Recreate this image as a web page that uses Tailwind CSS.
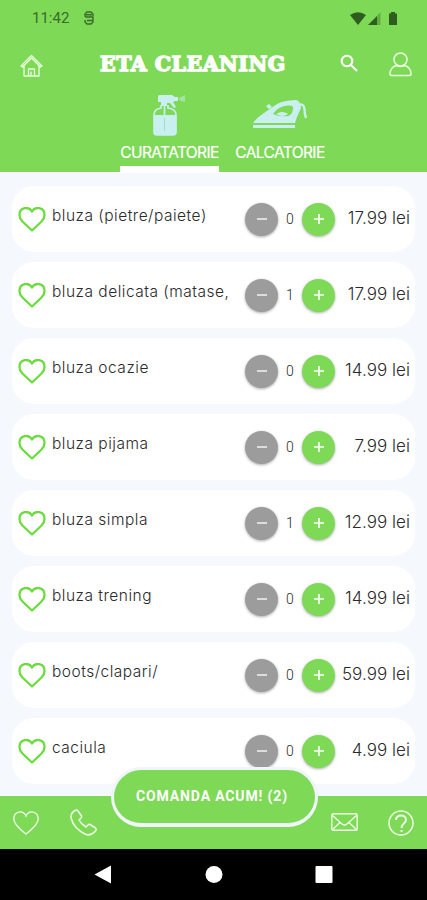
<!DOCTYPE html>
<html lang="ro">
<head>
  <meta charset="UTF-8" />
  <meta name="viewport" content="width=device-width, initial-scale=1.0"/>
  <title>ETA Cleaning</title>
  <script src="https://cdn.jsdelivr.net/npm/@tailwindcss/browser@4"></script>
</head>
<body class="bg-[#f5f9fe] font-['Inter',sans-serif]">
  <div class="w-[427px] h-[900px] flex flex-col overflow-hidden relative">

    <header class="h-[172px] shrink-0 bg-[#7ed957] flex flex-col">
      <!-- status bar -->
      <div class="h-9 flex items-center pl-8 pr-7 text-[#3b6a2a]">
        <span class="font-['Roboto',sans-serif] text-[15px] leading-none w-[52px]">11:42</span>
        <svg class="w-[10px] h-[14px]" viewBox="0 0 10 14" fill="none" stroke="currentColor" stroke-width="1.4"><path d="M9 5V3L7 1H3L1 3V5L2 6H9V11L7 13H3L1 11V9M2 3.700H8M3 9.500H9"/></svg>
        <svg class="ml-auto w-12 h-[15px] overflow-visible" viewBox="0 0 48 15" fill="#2f5d20"><path d="M-1 4Q7 -1.500 15 4L7 14Z"/><path d="M17 14L26 5V14Z"/><path d="M26 5L29.500 1V14H26Z" opacity=".35"/><path d="M40 1h4v1.500h2V14h-8V2.500h2Z"/></svg>
      </div>

      <div class="h-[56px] flex items-center pl-5 pr-[15px]">
        <svg class="w-[23px] h-[23px] mt-0.5" viewBox="0 0 23 23" fill="none" stroke="#eaffdf" stroke-width="1.3" stroke-linejoin="round" stroke-linecap="round"><path d="M1 12L11.500 1.500L22 12L20.500 13L11.500 4L2.500 13ZM4 12V22H19V12M8.500 22V15H14.500V22M11 22V18"/></svg>
        <h1 class="ml-[57px] w-[190px] whitespace-nowrap text-white text-[20.500px] leading-none font-bold font-['DejaVu_Serif',serif] tracking-[0.500px] [-webkit-text-stroke:1.400px_white]">ETA CLEANING</h1>
        <svg class="ml-[50px] -mt-0.5 w-[18px] h-[18px]" viewBox="0 0 18 18" fill="none" stroke="white" stroke-width="2.100"><circle cx="7" cy="7" r="5.300"/><path d="M11 11L17 17"/></svg>
        <svg class="ml-auto w-[23px] h-[25px]" viewBox="0 0 23 25" fill="none" stroke="#eaffdf" stroke-width="1.500"><circle cx="11.500" cy="7.500" r="6.500"/><path d="M7 13.500Q1 16 1 22Q1 23.500 3 23.500H20Q22 23.500 22 22Q22 16 16 13.500Q11.500 15.500 7 13.500Z"/></svg>
      </div>

      <nav class="h-20 flex pl-[120px] gap-4 text-white text-[15.500px]">
        <div class="w-[99px] flex flex-col items-center border-b-[6px] border-white">
          <svg class="w-[34px] h-[43px] mt-[2px]" viewBox="0 0 34 43"><g fill="#c9eff0"><path d="M5 2Q5 1 7 1H19L22 3H25V7H22L20 8L23 13L21 14L17 9H14V12H8V8H5Z"/><path d="M26 4L32 1V8L26 6Z" opacity=".5"/><path d="M1 21H23V39Q23 41 20 41H4Q1 41 1 39Z"/></g><path d="M8 11V14Q1 15 1 21V38Q1 41 4 41H20Q23 41 23 38V21Q23 15 15 14V11M11.500 12V21" fill="none" stroke="#c9eff0" stroke-width="1.700"/><path d="M11.500 24V37" stroke="#a3e0b4"/></svg>
          <span class="mt-[5px] leading-[22px] whitespace-nowrap tracking-[-0.600px] [-webkit-text-stroke:0.200px_white]">CURATATORIE</span>
        </div>
        <div class="w-[90px] flex flex-col items-center">
          <svg class="w-[56px] h-[43px] mt-[2px]" viewBox="0 0 56 43"><path fill="#c9eff0" fill-rule="evenodd" d="M1 29Q4 24 12 19L22 12Q27 8 34 7L43 6Q47 6 48 10L49 14L45 23L43 29ZM21 20Q26 12 36 11.500Q42 11 41 15Q40 21 36 22Q27 23 21 20ZM1 31H43V34H1Z"/><path d="M24 20Q30 16 36 20Q31 24 24 20ZM14 12L17 10L20 13L17 15Z" fill="#c9eff0"/><path d="M46 11Q52 9 52.500 15Q52.500 20 54 24" fill="none" stroke="#c9eff0" stroke-width="2.400"/></svg>
          <span class="mt-[5px] leading-[22px] whitespace-nowrap tracking-[-0.600px] [-webkit-text-stroke:0.200px_white]">CALCATORIE</span>
        </div>
      </nav>
    </header>

    <main id="items" class="h-[624px] shrink-0 overflow-hidden border-t border-white pt-[13px] px-3 flex flex-col gap-[10px]"></main>

    <footer class="h-[53px] shrink-0 bg-[#7ed957] flex items-center pl-[13px] pr-[13px]">
      <svg class="w-[26px] h-[24px]" viewBox="0 0 26 24" fill="none" stroke="#efffe7" stroke-width="1.400"><path d="M13 23Q1 14 .8 8C.8 0 10 -1.500 13 5C16 -1.500 25.200 0 25.200 8Q25 14 13 23Z"/></svg>
      <svg class="ml-[31px] w-[27px] h-[27px]" viewBox="0 0 27 27" fill="none" stroke="#efffe7" stroke-width="1.500" stroke-linejoin="round"><path d="M5 1.500Q7 .5 8 2L11.500 7Q12 8.500 10.500 9.500L9 11Q11 15 16 18L18 16Q19 15 20 15.500L25.500 19Q27 20.500 25 22.500Q21 27 16 25.500Q4 20 1 9Q.5 4 5 1.500Z"/></svg>
      <svg class="ml-auto -mt-0.5 w-[27px] h-[18px]" viewBox="0 0 27 18" fill="none" stroke="#efffe7" stroke-width="1.400"><rect x=".8" y=".8" width="25.400" height="16.400" rx="1.500"/><path d="M1 2L11 11Q13.500 13 16 11L26 2M2 16L9 9.500M25 16L18 9.500"/></svg>
      <svg class="ml-[30px] w-[26px] h-[26px]" viewBox="0 0 26 26" fill="none" stroke="#efffe7" stroke-width="1.500"><circle cx="13" cy="13" r="12"/><path d="M8 10C8 4 18 4 18 10C18 13.500 13.500 13 13.500 18" stroke-width="2"/><path d="M13.500 20V22" stroke-width="2"/></svg>
    </footer>

    <div class="h-[51px] shrink-0 bg-black">
      <svg class="w-full h-full" viewBox="0 0 427 51" fill="white"><path d="M94.500 25.500L111 16.500V34.500Z"/><circle cx="214" cy="25.500" r="8.500"/><rect x="315.500" y="17" width="17" height="17" rx="1"/></svg>
    </div>

    <!-- order button overlaps the list and the bottom bar -->
    <button class="absolute left-[111px] top-[767px] w-[207px] h-[60px] rounded-full bg-[#7ed957] border-x-[3px] border-t-[3px] border-b-4 border-[#f0f5fa] pr-[5px] text-white font-bold font-['Roboto',sans-serif] text-[14px] tracking-[0.850px] whitespace-nowrap">COMANDA ACUM! (2)</button>
  </div>

  <script>
    const items = [
      { name: "bluza (pietre/paiete)", qty: 0, price: "17.99" },
      { name: "bluza delicata (matase,", qty: 1, price: "17.99" },
      { name: "bluza ocazie", qty: 0, price: "14.99" },
      { name: "bluza pijama", qty: 0, price: "7.99" },
      { name: "bluza simpla", qty: 1, price: "12.99" },
      { name: "bluza trening", qty: 0, price: "14.99" },
      { name: "boots/clapari/", qty: 0, price: "59.99" },
      { name: "caciula", qty: 0, price: "4.99" },
    ];

    document.getElementById("items").innerHTML = items.map(item => `
      <div class="h-[66px] shrink-0 rounded-[22px] bg-white flex items-center pl-[6px] pr-[5px] text-[#2a2a2a]">
        <svg class="w-7 h-[25px] shrink-0" viewBox="0 0 28 25" fill="none" stroke="#6bdc3c" stroke-width="2.300" stroke-linejoin="round"><path d="M14 23.500L4.500 14.500Q1.500 11.500 1.500 8C1.500 0 11 -1 14 4.500C17 -1 26.500 0 26.500 8Q26.500 11.500 23.500 14.500Z"/></svg>
        <span class="ml-[6px] w-[181px] -mt-[6px] font-light text-[15.500px] tracking-[0.500px] whitespace-nowrap">${item.name}</span>
        <div class="ml-[12px] flex items-center">
          <button class="size-[33px] rounded-full bg-[#9c9c9c] shadow-[0_1px_3px_#0005] flex items-center justify-center"><svg class="size-[10px]" viewBox="0 0 10 10" stroke="#eee" stroke-width="1.600"><path d="M0 5H10"/></svg></button>
          <span class="w-[24px] text-center text-[14px] font-light font-['Roboto',sans-serif]">${item.qty}</span>
          <button class="size-[33px] rounded-full bg-[#7ed957] shadow-[0_1px_3px_#0005] flex items-center justify-center"><svg class="size-[10px]" viewBox="0 0 10 10" stroke="white" stroke-width="1.600"><path d="M0 5H10M5 0V10"/></svg></button>
        </div>
        <span class="ml-auto font-light text-[17px] tracking-[0.050px] whitespace-nowrap">${item.price} lei</span>
      </div>`).join("");
  </script>
</body>
</html>
